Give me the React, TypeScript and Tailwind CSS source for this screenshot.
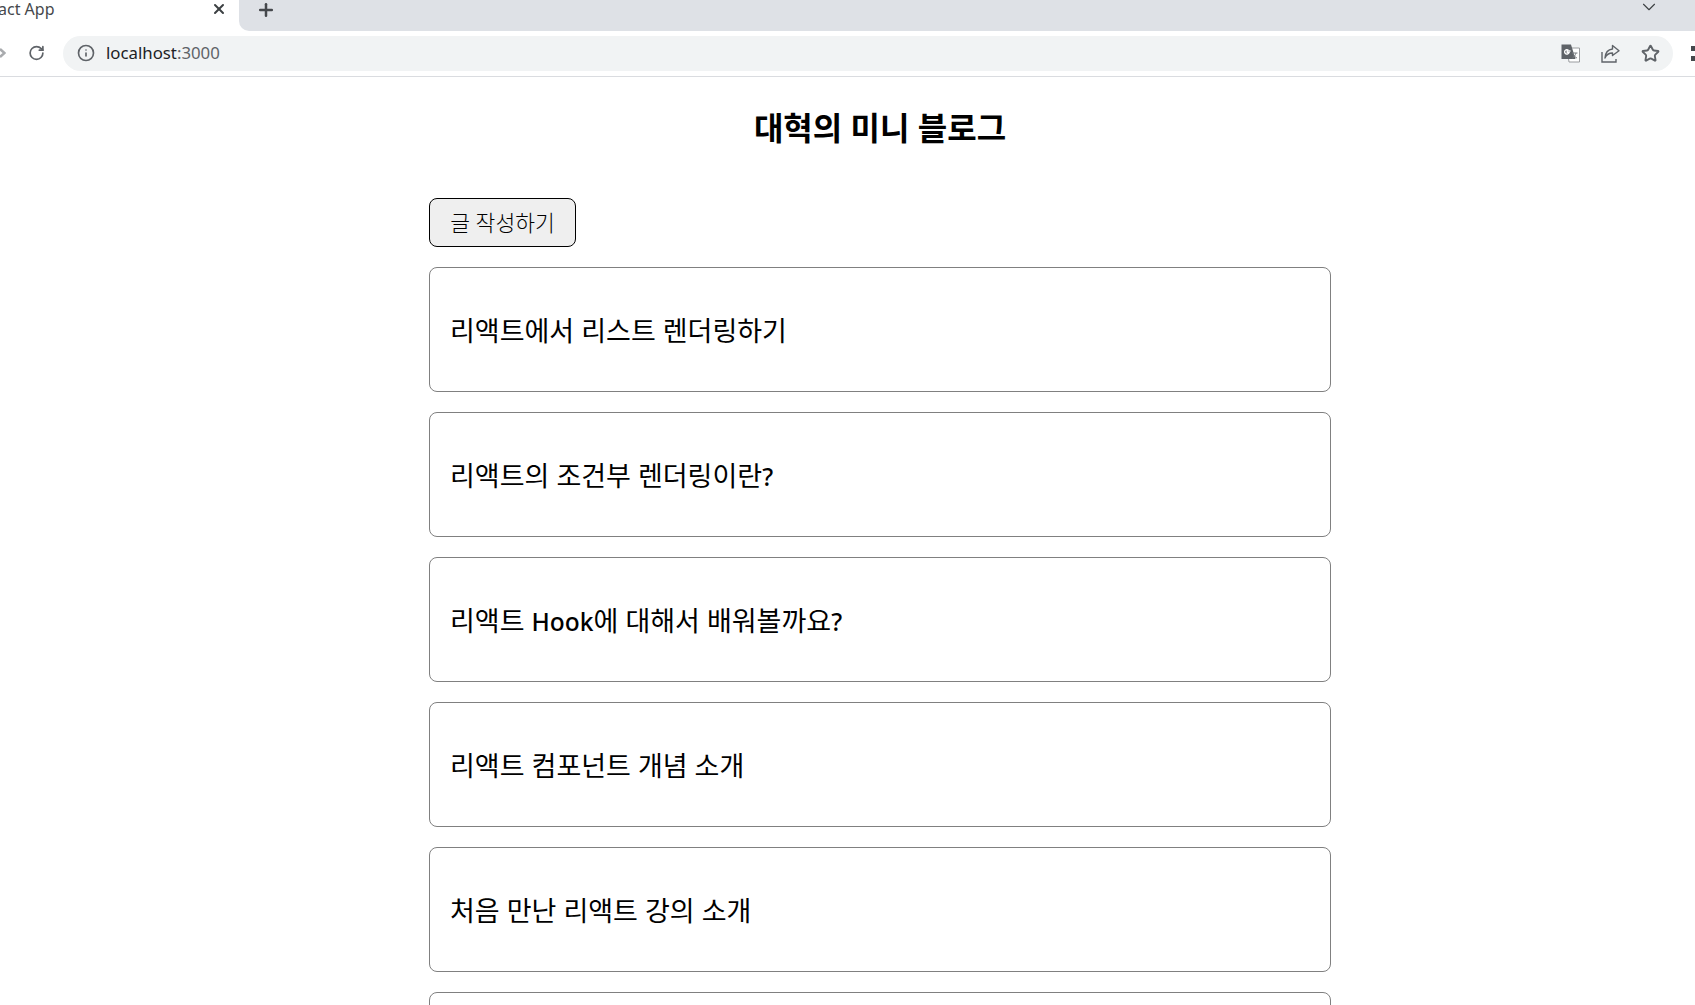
import { Plus, RotateCw, X, ChevronDown, Info, Star } from "lucide-react";

const latin = "text-[24.5px] font-medium";

const posts = [
  <>리액트에서 리스트 렌더링하기</>,
  <>리액트의 조건부 렌더링이란<span className={latin}>?</span></>,
  <>리액트 <span className={latin}>Hook</span>에 대해서 배워볼까요<span className={latin}>?</span></>,
  <>리액트 컴포넌트 개념 소개</>,
  <>처음 만난 리액트 강의 소개</>,
  <>리액트 개발 환경 구축하기</>,
];

function TranslateIcon() {
  return (
    <svg width="19" height="19" viewBox="0 0 19 19" aria-hidden="true">
      <path d="M6 4h12.500v14H8z" fill="#fff" stroke="#9a9c9f" strokeWidth="1" />
      <path d="M0.500 0.500h9.500l4.500 14.500H0.500z" fill="#5f6368" />
      <path d="M9.500 7H6.200v1.600h1.900a2.300 2.300 0 1 1-.7-2.500" fill="none" stroke="#fff" strokeWidth="1.300" />
      <path d="M11 9h5.500M15 9c-.5 2-2 4-3.500 5M12.500 10.500c.7 1.500 2 3 3.500 3.500" fill="none" stroke="#7d8084" strokeWidth="1" />
    </svg>
  );
}

function ShareIcon() {
  return (
    <svg width="19" height="19" viewBox="0 0 19 19" fill="none" stroke="#5f6368" strokeWidth="1.400" aria-hidden="true">
      <path d="M1 8v10h14v-3" />
      <path d="M11.500 1.500 18 6.800l-6.500 4.700V9C8 9 5.500 10.500 4 14c.3-5 3-8.500 7.500-9z" strokeLinejoin="round" />
    </svg>
  );
}

export default function App() {
  return (
    <div className="h-[1005px] overflow-hidden bg-white font-['Noto_Sans','Noto_Sans_CJK_KR',sans-serif] text-black">
      <header className="h-[77px] border-b border-[#dadce0]">
        <div className="flex h-[31px] bg-white">
          <div className="flex h-full w-[239px] shrink-0 overflow-hidden">
            <span className="ml-[-21px] mt-[-1px] w-[234px] shrink-0 text-[16px] leading-[20px] text-[#45484c]">React App</span>
            <X size={16} strokeWidth={3} className="ml-[-2px] mt-[1px] shrink-0 text-[#3c4043]" />
          </div>
          <div className="flex h-full flex-1 rounded-bl-[10px] bg-[#dee1e6]">
            <Plus size={20} strokeWidth={3} className="ml-[17px] mt-0 text-[#45484c]" />
            <ChevronDown size={22} strokeWidth={1.2} className="ml-auto mr-[35px] mt-[-4px] text-[#3c4043]" />
          </div>
        </div>
        <div className="flex h-[45px] items-center bg-white pb-[1px]">
          <svg width="6" height="12" viewBox="0 0 6 12" className="shrink-0" aria-hidden="true">
            <path d="M0 2l4.500 4L0 10" fill="none" stroke="#a9abae" strokeWidth="2.500" />
          </svg>
          <RotateCw size={20} strokeWidth={2.4} className="ml-[22px] text-[#5f6368]" />
          <div className="ml-[18px] flex h-[35px] w-[1610px] shrink-0 items-center rounded-full bg-[#f1f3f4] pl-[14px]">
            <Info size={18} strokeWidth={2.2} className="text-[#5f6368]" />
            <span className="ml-[11px] text-[16.8px] leading-[20px] text-[#202124]">
              localhost<span className="text-[#5f6368]">:3000</span>
            </span>
            <div className="ml-auto mr-[13px] flex items-center gap-[21px]">
              <TranslateIcon />
              <ShareIcon />
              <Star size={19} strokeWidth={2.4} className="text-[#5f6368]" />
            </div>
          </div>
          <div className="ml-[18px] flex flex-col gap-[5px]">
            <span className="h-[5px] w-[4px] bg-[#45484c]" />
            <span className="h-[5px] w-[4px] bg-[#45484c]" />
          </div>
        </div>
      </header>

      <main className="ml-[429px] flex w-[902px] flex-col">
        <h1 className="mt-[29px] h-[43px] text-center text-[32px] leading-[43px] font-bold">대혁의 미니 블로그</h1>
        <div className="mt-[49px] flex flex-col items-start">
          <button className="h-[49px] w-[147px] rounded-[8px] border border-black bg-[#efefef] text-[21.5px] leading-[26px] font-light text-black">
            글 작성하기
          </button>
          <ul className="mt-[20px] flex w-full flex-col gap-[20px]">
            {posts.map((p, i) => (
              <li
                key={i}
                className="flex h-[125px] shrink-0 items-baseline rounded-[8px] border border-[#808080] bg-white pl-[20px] pt-[45px] text-[27px] leading-[36px] font-normal whitespace-pre"
              >
                <span>{p}</span>
              </li>
            ))}
          </ul>
        </div>
      </main>
    </div>
  );
}
